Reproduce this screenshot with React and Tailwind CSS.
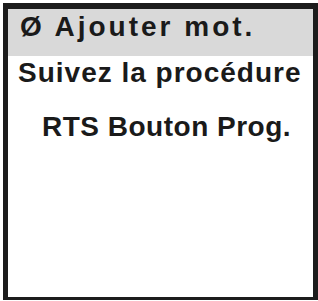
import React from 'react';

const font = { fontFamily: '"Liberation Sans", Arial, sans-serif' };

export default function App() {
    return (
        <div className="w-[318px] h-[301px] bg-white pl-[3px] pt-[3px] pb-px">
            <div
                className="h-full flex flex-col border-[#1c1c1c] border-l-[5px] border-t-[6px] border-r-[5px] border-b-[3px] text-[#1a1a1a] font-bold text-[28px] leading-none"
                style={font}
            >
                {/* Selected menu row */}
                <div className="h-[47px] shrink-0 bg-[#d9d9d9] pt-[4px] pl-[12px] tracking-[3px]">
                    Ø Ajouter mot.
                </div>
                <div className="h-[57px] shrink-0 pt-[3px] pl-[10px] tracking-[1px]">
                    Suivez la procédure
                </div>
                <div className="pl-[34px] tracking-[0.5px]">
                    RTS Bouton Prog.
                </div>
            </div>
        </div>
    );
}
